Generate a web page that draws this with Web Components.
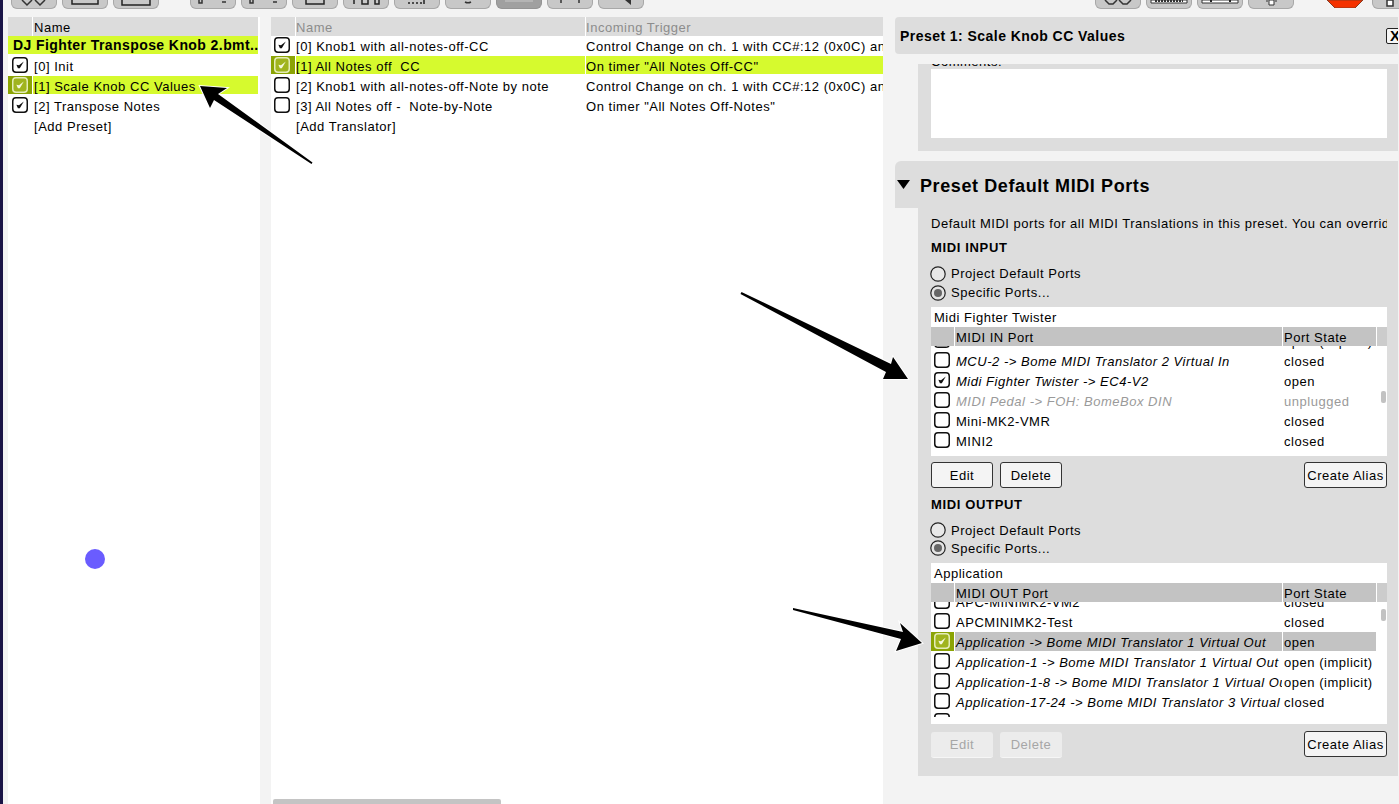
<!DOCTYPE html>
<html>
<head>
<meta charset="utf-8">
<title>Bome MIDI Translator</title>
<style>
  html, body { margin: 0; height: 100%; }
  body { background: #f3f3f3; font: 13px "Liberation Sans", Arial, sans-serif; color: #000; overflow: hidden; }
  #app { position: relative; width: 1399px; height: 804px; overflow: hidden; background: linear-gradient(#1a1446, #1a1446) 0 0 / 3px 100% no-repeat; }
  #columns { display: grid; grid-template-columns: 252px 612px 504px; column-gap: 11px; padding-left: 8px; height: 787px; margin-top: 8px; }
  #columns > preset-panel { margin-left: 1px; }
</style>
</head>
<body>
<div id="app">
  <tool-bar></tool-bar>
  <div id="columns">
    <list-panel cols="name" gutter="2">
      <span slot="head-name">Name</span>
      <list-row title-row>DJ Fighter Transpose Knob 2.bmt..</list-row>
      <list-row checked>[0] Init</list-row>
      <list-row checked selected>[1] Scale Knob CC Values</list-row>
      <list-row checked>[2] Transpose Notes</list-row>
      <list-row nobox>[Add Preset]</list-row>
    </list-panel>
    <list-panel cols="trigger" scrollbar dim>
      <span slot="head-name">Name</span>
      <span slot="head-trigger">Incoming Trigger</span>
      <list-row cols="trigger" checked>[0] Knob1 with all-notes-off-CC<span slot="trigger">Control Change on ch. 1 with CC#:12 (0x0C) and...</span></list-row>
      <list-row cols="trigger" checked selected>[1] All Notes off &nbsp;CC<span slot="trigger">On timer "All Notes Off-CC"</span></list-row>
      <list-row cols="trigger">[2] Knob1 with all-notes-off-Note by note<span slot="trigger">Control Change on ch. 1 with CC#:12 (0x0C) and...</span></list-row>
      <list-row cols="trigger">[3] All Notes off - &nbsp;Note-by-Note<span slot="trigger">On timer "All Notes Off-Notes"</span></list-row>
      <list-row cols="trigger" nobox>[Add Translator]</list-row>
    </list-panel>
    <preset-panel>
      <port-group slot="ports" heading="MIDI INPUT" radio-h="19" top="8" list-gap="5" btn-gap="6">
        <port-list name="Midi Fighter Twister" column="MIDI IN Port" view="105" total="110" offset="-15" thumb="45">
          <port-row italic name="MCU-1 -&gt; Bome MIDI Translator 1 Virtual In" state="open (implicit)"></port-row>
          <port-row italic name="MCU-2 -&gt; Bome MIDI Translator 2 Virtual In" state="closed"></port-row>
          <port-row italic checked name="Midi Fighter Twister -&gt; EC4-V2" state="open"></port-row>
          <port-row italic off name="MIDI Pedal -&gt; FOH: BomeBox DIN" state="unplugged"></port-row>
          <port-row name="Mini-MK2-VMR" state="closed"></port-row>
          <port-row name="MINI2" state="closed"></port-row>
        </port-list>
      </port-group>
      <port-group slot="ports" heading="MIDI OUTPUT" radio-h="18" top="8" list-gap="6" btn-gap="7" disabled style="margin-top:9px">
        <port-list name="Application" column="MIDI OUT Port" view="115" total="122" offset="-10" thumb="7">
          <port-row name="APC-MINIMK2-VM2" state="closed"></port-row>
          <port-row name="APCMINIMK2-Test" state="closed"></port-row>
          <port-row italic checked selected name="Application -&gt; Bome MIDI Translator 1 Virtual Out" state="open"></port-row>
          <port-row italic name="Application-1 -&gt; Bome MIDI Translator 1 Virtual Out" state="open (implicit)"></port-row>
          <port-row italic name="Application-1-8 -&gt; Bome MIDI Translator 1 Virtual Out" state="open (implicit)"></port-row>
          <port-row italic name="Application-17-24 -&gt; Bome MIDI Translator 3 Virtual Out" state="closed"></port-row>
          <port-row italic name="Application-9-16 -&gt; Bome MIDI Translator 2 Virtual Out" state="closed"></port-row>
        </port-list>
      </port-group>
    </preset-panel>
  </div>
  <arrow-layer></arrow-layer>
</div>

<script>
const TEXT_CSS = 'font: 13px "Liberation Sans", Arial, sans-serif; letter-spacing: .52px;';

class ShadowBase extends HTMLElement {
  constructor() {
    super();
    this.attachShadow({ mode: 'open' });
  }
  connectedCallback() {
    this.render();
  }
}

class ToolBar extends ShadowBase {
  render() {
    // only the bottom of the toolbar is in view, so icons are just their lower edges
    const icons = [
      '<path d="M11 0l5 5 5-5M24 0l5 5 5-5" fill="none" stroke="#333" stroke-width="1.5"/>',
      '<path d="M10 0v4h26V0" fill="none" stroke="#222" stroke-width="1.5"/>',
      '<path d="M9 0v5h28V0" fill="none" stroke="#222" stroke-width="1.5"/>',
      '<path d="M9 0v3h3V0M32 2h4" fill="none" stroke="#333" stroke-width="1.5"/>',
      '<path d="M9 0v3h3V0M32 2h4" fill="none" stroke="#333" stroke-width="1.5"/>',
      '<path d="M14 0v4h18V0" fill="none" stroke="#222" stroke-width="1.5"/>',
      '<path d="M11 0v4M19 0v4h6V0M32 0v4h4V0" fill="none" stroke="#222" stroke-width="1.5"/>',
      '<path d="M14 3h2M18 3h2M22 3h2M26 3h2M30 0v4" fill="none" stroke="#222" stroke-width="1.5"/>',
      '<path d="M20 2a4 2 0 0 0 6 0" fill="none" stroke="#333" stroke-width="1.5"/>',
      '<rect x="9" y="0" width="28" height="2" fill="#b4b4b4"/>',
      '<path d="M14 0v3M32 0v3" fill="none" stroke="#333" stroke-width="1.5"/>',
      '<path d="M27 0l6 5V0z" fill="#333"/>'
    ];
    const rightIcons = [
      '<path d="M10 0l4 4h4l4-4M24 0l4 4h4l4-4" fill="none" stroke="#333" stroke-width="1.5"/>',
      '<path d="M5 0v3h36V0z" fill="#fff" stroke="#333"/><path d="M9 1h28" stroke="#333" stroke-dasharray="2 1" stroke-width="2"/>',
      '<path d="M5 0v3h36V0z" fill="#fff" stroke="#333"/><path d="M14 0v2M33 0v2" stroke="#222" stroke-width="2"/>',
      '<path d="M18 1h2M27 1h2M21 0v5h5V0z" fill="#fff" stroke="#333"/>'
    ];
    const btn = (svg, cls = '') => `<div class="btn ${cls}"><svg width="46" height="8">${svg}</svg></div>`;
    this.shadowRoot.innerHTML = `
      <style>
        :host { display: flex; height: 9px; padding-left: 11px; gap: 5px; overflow: hidden; }
        .btn {
          flex: none; width: 44px; height: 8px; margin-top: -1px; padding-top: 1px;
          background: #c8c8c8; border: 1px solid #a8a8a8; border-top: none;
          border-radius: 0 0 6px 6px; overflow: hidden;
        }
        .btn svg { display: block; margin-left: -1px; }
        .active { background: #a0a0a0; border-color: #949494; }
        .group { margin-left: 26px; }
        .far { margin-left: 446px; }
        .stop { flex: none; width: 36px; height: 8px; margin-left: 28px; }
        .last { margin-left: 4px; }
      </style>
      ${icons.map((s, i) => btn(s, i === 3 ? 'group' : i === 9 ? 'active' : '')).join('')}
      ${rightIcons.map((s, i) => btn(s, i === 0 ? 'far' : '')).join('')}
      <svg class="stop" viewBox="0 0 36 8"><path d="M0 0h36l-8 8H8z" fill="#f53200" stroke="#8a3a20"/></svg>
      ${btn('<path d="M15 0v6h6V0z" fill="#fff" stroke="#333" stroke-width="1.5"/>', 'last')}
    `;
  }
}

class CheckBox extends ShadowBase {
  render() {
    const on = this.hasAttribute('checked');
    const sel = this.hasAttribute('selected');
    const line = sel ? '#e4ecb8' : '#111';
    const fill = sel ? '#a0b41e' : '#fff';
    const tick = sel ? '#f4f8dc' : '#111';
    this.shadowRoot.innerHTML = `
      <style>
        :host { display: block; width: 16px; height: 16px; }
        svg { display: block; }
      </style>
      <svg width="16" height="16" viewBox="0 0 16 16">
        <rect x=".75" y=".75" width="14.5" height="14.5" rx="3.2" fill="${fill}" stroke="${line}" stroke-width="1.5"/>
        ${on ? `<path d="M4.4 7.8l2.6.5L11.8 4.6 7.8 11.2H5.9z" fill="${tick}"/>` : ''}
      </svg>
    `;
  }
}

class ListPanel extends ShadowBase {
  render() {
    const trigger = this.getAttribute('cols') === 'trigger';
    const gutter = this.getAttribute('gutter') || 0;
    const color = this.hasAttribute('dim') ? '#8c8c8c' : '#000';
    this.shadowRoot.innerHTML = `
      <style>
        :host { display: flex; flex-direction: column; background: #fff; min-width: 0; overflow: hidden; ${TEXT_CSS} }
        .head {
          flex: none; display: grid; height: 19px; line-height: 22px; margin-right: ${gutter}px; column-gap: 1px;
          grid-template-columns: ${trigger ? '24px 289px 1fr' : '24px 1fr'}; color: ${color};
        }
        .head div { background: #dcdcdc; padding-left: ${trigger ? 0 : 1}px; overflow: hidden; white-space: nowrap; }
        .rows { flex: 1; margin-right: ${gutter}px; }
        .scroll { flex: none; height: 5px; width: 228px; margin-left: 2px; background: #c4c4c4; border-radius: 2px 2px 0 0; }
      </style>
      <div class="head">
        <div></div>
        <div><slot name="head-name"></slot></div>
        ${trigger ? '<div><slot name="head-trigger"></slot></div>' : ''}
      </div>
      <div class="rows"><slot></slot></div>
      ${this.hasAttribute('scrollbar') ? '<div class="scroll"></div>' : ''}
    `;
  }
}

class ListRow extends ShadowBase {
  render() {
    const trigger = this.getAttribute('cols') === 'trigger';
    const sel = this.hasAttribute('selected');
    if (this.hasAttribute('title-row')) {
      this.shadowRoot.innerHTML = `
        <style>
          :host { display: block; height: 20px; }
          div {
            height: 18px; background: #d6fa2e; padding-left: 5px; white-space: nowrap; overflow: hidden;
            font: bold 14px/19px "Liberation Sans", Arial, sans-serif; letter-spacing: .42px;
          }
        </style>
        <div><slot></slot></div>
      `;
      return;
    }
    const box = this.hasAttribute('nobox') ? '' :
      `<check-box ${this.hasAttribute('checked') ? 'checked' : ''} ${sel ? 'selected' : ''}></check-box>`;
    this.shadowRoot.innerHTML = `
      <style>
        :host { display: grid; height: 20px; line-height: 21px; column-gap: 1px; grid-template-columns: ${trigger ? '24px 289px 1fr' : '24px 1fr'}; }
        .cell { height: ${sel ? 18 : 20}px; padding-left: ${trigger ? 0 : 1}px; white-space: nowrap; overflow: hidden; ${sel ? 'background: #d6fa2e;' : ''} }
        .cell-check { height: ${sel ? 18 : 20}px; padding: 1px 0 0 ${trigger ? 3 : 4}px; box-sizing: border-box; ${sel ? 'background: #8ba404;' : ''} }
      </style>
      <div class="cell-check">${box}</div>
      <div class="cell"><slot></slot></div>
      ${trigger ? '<div class="cell"><slot name="trigger"></slot></div>' : ''}
    `;
  }
}

class PresetPanel extends ShadowBase {
  render() {
    this.shadowRoot.innerHTML = `
      <style>
        :host { display: block; min-width: 0; overflow: hidden; ${TEXT_CSS} }
        .top {
          display: flex; align-items: center; justify-content: space-between; height: 37px; padding-left: 5px;
          background: #dddddd; border-radius: 4px 0 0 4px;
        }
        h2 { margin: 0; font: bold 14px "Liberation Sans", Arial, sans-serif; letter-spacing: .45px; }
        .close {
          width: 19px; height: 16px; box-sizing: border-box; margin-right: -7px; padding-left: 3px;
          border: 1px solid #222; border-radius: 2px; background: #f6f6f6;
          font: bold 15px/14px "Liberation Sans", Arial, sans-serif; overflow: hidden;
        }
        .block { margin: 10px 0 0 23px; padding: 0 11px 0 13px; background: #dddddd; }
        .comments { height: 87px; overflow: hidden; box-sizing: border-box; }
        .comments span { display: block; height: 14px; line-height: 14px; margin-top: -9px; }
        .comments div { height: 69px; background: #fff; }
        .section {
          display: flex; align-items: center; height: 47px; margin-top: 10px;
          background: #dddddd; border-radius: 6px 0 0 0;
        }
        .section svg { margin: 0 10px 0 2px; flex: none; }
        .section h3 { margin: 3px 0 0; font: bold 18px "Liberation Sans", Arial, sans-serif; letter-spacing: .6px; }
        .ports { margin-top: 0; height: 568px; box-sizing: border-box; padding-top: 7px; }
        .desc { height: 16px; line-height: 17px; width: 456px; white-space: nowrap; overflow: hidden; }
      </style>
      <div class="top"><h2>Preset 1: Scale Knob CC Values</h2><div class="close">X</div></div>
      <div class="block comments"><span>Comments:</span><div></div></div>
      <div class="section">
        <svg width="13" height="9" viewBox="0 0 13 9"><path d="M0 0h13L6.5 9z"/></svg>
        <h3>Preset Default MIDI Ports</h3>
      </div>
      <div class="block ports">
        <div class="desc">Default MIDI ports for all MIDI Translations in this preset. You can override them for individual translators.</div>
        <slot name="ports"></slot>
      </div>
    `;
  }
}

class PortGroup extends ShadowBase {
  render() {
    const rh = this.getAttribute('radio-h');
    const top = this.getAttribute('top');
    const off = this.hasAttribute('disabled') ? 'disabled' : '';
    const radio = (label, on) => `
      <div class="radio">
        <svg width="16" height="16" viewBox="0 0 16 16">
          <circle cx="8" cy="8" r="7.2" fill="${on ? '#e4e4e4' : '#e8e8e8'}" stroke="#222" stroke-width="1.2"/>
          ${on ? '<circle cx="8" cy="8" r="4" fill="#666"/>' : ''}
        </svg>
        <span>${label}</span>
      </div>`;
    this.shadowRoot.innerHTML = `
      <style>
        :host { display: block; margin-top: 9px; }
        h4 { margin: 0; height: 16px; font: bold 13px/16px "Liberation Sans", Arial, sans-serif; letter-spacing: .65px; }
        .radios { margin-top: ${top}px; }
        .radio { display: flex; align-items: center; gap: 5px; height: ${rh}px; }
        .radio svg { flex: none; margin-left: -1px; }
        .list { margin-top: ${this.getAttribute('list-gap')}px; }
        .btns { display: flex; gap: 7px; margin-top: ${this.getAttribute('btn-gap')}px; }
        .btns push-button:last-child { margin-left: auto; }
      </style>
      <h4>${this.getAttribute('heading')}</h4>
      <div class="radios">${radio('Project Default Ports', false)}${radio('Specific Ports...', true)}</div>
      <div class="list"><slot></slot></div>
      <div class="btns">
        <push-button ${off} style="width:62px">Edit</push-button>
        <push-button ${off} style="width:62px">Delete</push-button>
        <push-button style="width:83px">Create Alias</push-button>
      </div>
    `;
  }
}

class PushButton extends ShadowBase {
  render() {
    const off = this.hasAttribute('disabled');
    this.shadowRoot.innerHTML = `
      <style>
        :host { display: block; box-sizing: border-box; height: 26px; ${TEXT_CSS} text-align: center; line-height: 25px; white-space: nowrap;
          border-radius: 3px;
          ${off ? 'color: #a6a6a6; background: #ececec; border-bottom: 1px solid #f6f6f6; margin: 1px 0 0; padding: 0;' :
                  'color: #000; background: #f4f4f4; border: 1px solid #333;'}
        }
      </style>
      <slot></slot>
    `;
  }
}

class PortList extends ShadowBase {
  render() {
    const view = this.getAttribute('view');
    const total = this.getAttribute('total');
    this.shadowRoot.innerHTML = `
      <style>
        :host { display: block; position: relative; background: #fff; ${TEXT_CSS} }
        .name { height: 20px; line-height: 21px; padding-left: 3px; }
        .head { display: grid; height: 19px; line-height: 21px; grid-template-columns: 23px 327px 93px 1fr; column-gap: 1px; }
        .head div { background: #c3c3c3; padding-left: 1px; white-space: nowrap; overflow: hidden; }
        .head div:last-child { background: #cccccc; }
        .body { height: ${total}px; }
        .view { height: ${view}px; overflow: hidden; }
        .inner { margin-top: ${this.getAttribute('offset')}px; }
        .thumb { position: absolute; left: 450px; top: ${39 + Number(this.getAttribute('thumb'))}px; width: 5px; height: 12px; background: #c2c2c2; border-radius: 2px; }
      </style>
      <div class="name">${this.getAttribute('name')}</div>
      <div class="head"><div></div><div>${this.getAttribute('column')}</div><div>Port State</div><div></div></div>
      <div class="body"><div class="view"><div class="inner"><slot></slot></div></div></div>
      <div class="thumb"></div>
    `;
  }
}

class PortRow extends ShadowBase {
  render() {
    const sel = this.hasAttribute('selected');
    const name = this.getAttribute('name').replace(/>/g, '&gt;');
    this.shadowRoot.innerHTML = `
      <style>
        :host { display: grid; height: 20px; line-height: 21px; width: 445px; grid-template-columns: 23px 327px 93px; column-gap: 1px; ${this.hasAttribute('off') ? 'color: #9a9a9a;' : ''} }
        .cell { height: ${sel ? 19 : 20}px; padding-left: 1px; white-space: nowrap; overflow: hidden; ${sel ? 'background: #c3c3c3;' : ''} }
        .name { ${this.hasAttribute('italic') ? 'font-style: italic;' : ''} }
        .box { height: ${sel ? 19 : 20}px; padding: 1px 0 0 3px; box-sizing: border-box; ${sel ? 'background: #8ba404;' : ''} }
      </style>
      <div class="box"><check-box ${this.hasAttribute('checked') ? 'checked' : ''} ${sel ? 'selected' : ''}></check-box></div>
      <div class="cell name">${name}</div>
      <div class="cell">${this.getAttribute('state')}</div>
    `;
  }
}

class ArrowLayer extends ShadowBase {
  render() {
    // hand drawn annotations and the pointer dot lie over the whole window
    this.shadowRoot.innerHTML = `
      <style>
        :host { position: absolute; left: 0; top: 0; width: 1399px; height: 804px; pointer-events: none; }
        svg { display: block; }
        polygon { fill: #000; stroke: #fff; stroke-width: 2; paint-order: stroke; stroke-linejoin: miter; }
      </style>
      <svg width="1399" height="804" viewBox="0 0 1399 804">
        <polygon points="312.5,162.5 218,94 227,88 200,86 210,108 214,100 311.5,164"/>
        <polygon points="741.5,292 891,364 893,357 908,379 883,379 886,372 740.5,294"/>
        <polygon points="793,608 903,632 900,623 922,643 896,651 901,639 793,610"/>
        <circle cx="95" cy="559" r="10" fill="#6a5cff"/>
      </svg>
    `;
  }
}

customElements.define('tool-bar', ToolBar);
customElements.define('check-box', CheckBox);
customElements.define('list-panel', ListPanel);
customElements.define('list-row', ListRow);
customElements.define('preset-panel', PresetPanel);
customElements.define('port-group', PortGroup);
customElements.define('push-button', PushButton);
customElements.define('port-list', PortList);
customElements.define('port-row', PortRow);
customElements.define('arrow-layer', ArrowLayer);
</script>
</body>
</html>
